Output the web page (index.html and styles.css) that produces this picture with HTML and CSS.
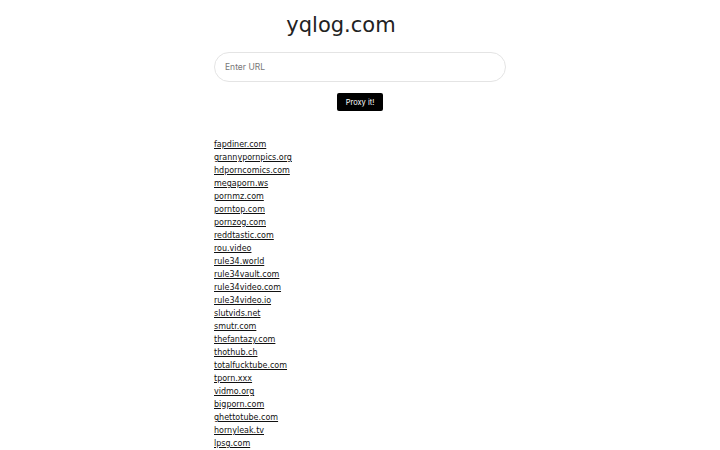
FILE: index.html
```html
<!DOCTYPE html>
<html lang="en">
<head>
  <meta charset="UTF-8" />
  <meta name="viewport" content="width=device-width, initial-scale=1.0"/>
  <title>yqlog.com</title>
  <link rel="stylesheet" href="styles.css">
</head>
<body>

  <header>
    <h1 class="site-title">yqlog.com</h1>
  </header>

  <main>
    <form class="proxy-form" onsubmit="return false;">
      <input class="url-input" type="text" placeholder="Enter URL">
      <button class="proxy-btn" type="submit">Proxy it!</button>
    </form>

    <ul class="site-list">
      <li><a href="#">fapdiner.com</a></li>
      <li><a href="#">grannypornpics.org</a></li>
      <li><a href="#">hdporncomics.com</a></li>
      <li><a href="#">megaporn.ws</a></li>
      <li><a href="#">pornmz.com</a></li>
      <li><a href="#">porntop.com</a></li>
      <li><a href="#">pornzog.com</a></li>
      <li><a href="#">reddtastic.com</a></li>
      <li><a href="#">rou.video</a></li>
      <li><a href="#">rule34.world</a></li>
      <li><a href="#">rule34vault.com</a></li>
      <li><a href="#">rule34video.com</a></li>
      <li><a href="#">rule34video.io</a></li>
      <li><a href="#">slutvids.net</a></li>
      <li><a href="#">smutr.com</a></li>
      <li><a href="#">thefantazy.com</a></li>
      <li><a href="#">thothub.ch</a></li>
      <li><a href="#">totalfucktube.com</a></li>
      <li><a href="#">tporn.xxx</a></li>
      <li><a href="#">vidmo.org</a></li>
      <li><a href="#">bigporn.com</a></li>
      <li><a href="#">ghettotube.com</a></li>
      <li><a href="#">hornyleak.tv</a></li>
      <li><a href="#">lpsg.com</a></li>
    </ul>
  </main>

</body>
</html>
```

FILE: styles.css
```css
* {
  margin: 0;
  padding: 0;
  box-sizing: border-box;
}

body {
  font-family: 'DejaVu Sans', sans-serif;
  background-color: #fff;
  color: #111;
}

header {
  padding-top: 12px;
  padding-right: 38px;
  text-align: center;
}

.site-title {
  font-size: 21px;
  font-weight: 400;
  line-height: 26px;
  color: #222;
}

main {
  width: 292px;
  margin: 0 auto;
}

.proxy-form {
  display: flex;
  flex-direction: column;
  align-items: center;
  gap: 11px;
  margin-top: 14px;
}

.url-input {
  width: 100%;
  height: 30px;
  padding: 0 10px;
  border: 1px solid #e4e4e4;
  border-radius: 15px;
  font-family: 'Inter', sans-serif;
  font-size: 8.5px;
  outline: none;
}

.url-input::placeholder {
  color: #777;
}

.proxy-btn {
  width: 46px;
  height: 18px;
  background-color: #000;
  color: #fff;
  border: none;
  border-radius: 2px;
  font-family: 'Inter', sans-serif;
  font-size: 7.5px;
  cursor: pointer;
}

.site-list {
  list-style: none;
  margin-top: 27px;
}

.site-list li {
  font-size: 8px;
  line-height: 13px;
}

.site-list a {
  color: #111;
  text-decoration: underline;
}
```
